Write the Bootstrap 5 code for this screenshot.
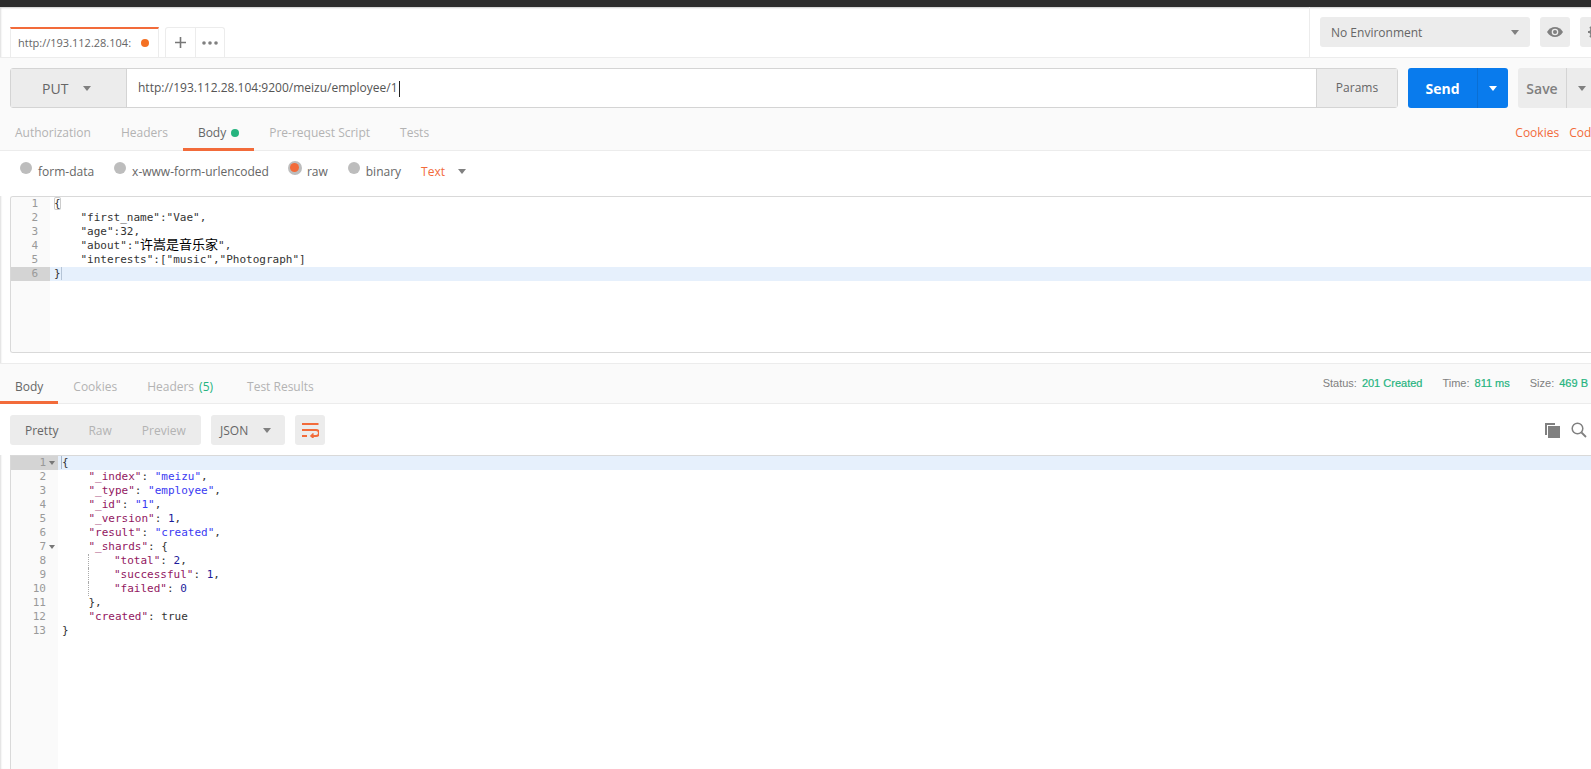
<!DOCTYPE html>
<html lang="en"><head><meta charset="utf-8"><title>Postman</title>
<link rel="stylesheet" href="https://cdn.jsdelivr.net/npm/bootstrap@5.3.0/dist/css/bootstrap.min.css">
<style>
html,body{height:100%;overflow:hidden;background:#fff}
body{font-family:"Open Sans","Noto Sans",sans-serif;font-size:12px;color:#808080}
.shell{width:1607px;height:769px;box-shadow:inset 2px 0 2px -1px #ddd}
.topline{height:7px;background:#2c2c2c;box-shadow:0 1px 2px #ccc}
.strip{height:51px;border-bottom:1px solid #ececec}
.tabbox{width:149px;height:30px;margin-left:10px;border:1px solid #ececec;border-top:2px solid #f26b3a;border-bottom:0;padding-left:7px;font-size:11px;color:#666;white-space:nowrap;overflow:hidden}
.unsaved{width:8px;height:8px;border-radius:50%;background:#f47023;margin-left:auto;margin-right:9px;flex:none}
.plusgroup{margin-left:6px;height:30px;border:1px solid #ececec;border-bottom:0;border-radius:3px 3px 0 0}
.plusgroup>div{height:100%;display:flex;align-items:center;justify-content:center}
.plusbox{width:30px;border-right:1px solid #ececec}
.dotsbox{width:28px}
.envarea{width:298px;border-left:1px solid #ececec;padding:10px 0 0 10px;gap:10px;height:50px}
.envsel{flex:none;width:210px;height:30px;background:#ececec;border-radius:3px;padding:1px 11px 0;color:#666}
.sqbtn{flex:none;width:30px;height:30px;background:#ececec;border-radius:3px}
.reqarea{background:#fafafa}
.reqrow{height:50px;padding:10px 10px 0;gap:10px}
.urlgroup{flex:1;border:1px solid #d4d4d4;border-radius:3px;background:#fff;min-width:0}
.methodbox{width:116px;background:#ececec;border-right:1px solid #d4d4d4;font-size:14px;color:#666;padding-left:31px;gap:15px}
.urlbox{flex:1;padding-left:11px;color:#555;font-size:12px}
.caret-bar{display:inline-block;width:1px;height:16px;background:#222;vertical-align:middle;margin-left:1px}
.paramsbox{width:81px;background:#ececec;border-left:1px solid #d4d4d4;color:#666;justify-content:center}
.sendgrp{width:100px;background:#097bed;border-radius:3px;color:#fff;font-size:14px;font-weight:700}
.sendmain{width:70px;justify-content:center;border-right:1px solid #0a6fd4}
.sendarr{width:30px;justify-content:center}
.savegrp{width:79px;background:#ececec;border-radius:3px;color:#808080;font-size:14px;font-weight:600}
.savemain{width:49px;justify-content:center;border-right:1px solid #d4d4d4}
.savearr{width:30px;justify-content:center}
.tabrow{height:43px;border-bottom:1px solid #ececec}
.tabitem{padding:7px 15px 0;color:#b3b3b3;height:43px;display:flex;align-items:center;gap:5px;margin-bottom:-1px;white-space:nowrap}
.tabitem.on{color:#666;border-bottom:3px solid #f26b3a;padding-top:10px}
.gooddot{width:8px;height:8px;border-radius:50%;background:#26b47f}
.greentxt{color:#26b47f}
.orangetxt{color:#f26b3a}
.linkrow{margin-left:auto;padding:7px 9px 0 0;gap:10px;color:#f26b3a}
.radiorow{height:45px;padding-left:20px;padding-bottom:4px;background:#fff;color:#666}
.radioitem{display:flex;align-items:center;gap:6px;margin-right:20px}
.radiodot{width:12px;height:12px;border-radius:50%;background:#bdbdbd;margin-top:-8px;display:flex;align-items:center;justify-content:center}
.radiodot.sel{width:14px;height:14px;margin-left:-1px;margin-right:-1px}
.radiodot.sel i{display:block;width:9px;height:9px;border-radius:50%;background:#f26b3a}
.trispace{margin-left:13px}
.editor{margin-left:10px;border:1px solid #d9d9d9;border-right:0;font-family:"DejaVu Sans Mono","Liberation Mono",monospace;font-size:11px;line-height:14px;color:#333;background:#fff;overflow:hidden}
.reqedit{height:157px;border-radius:3px 0 0 3px;margin-bottom:10px}
.resedit{height:314px;border-bottom:0}
.cmrow{display:flex;height:14px;white-space:pre}
.gutter{flex:none;background:#fafafa;color:#999;text-align:right}
.reqedit .gutter{width:39px;padding-right:12px}
.resedit .gutter{width:47px;padding-right:12px;position:relative}
.cmcode{padding-left:4px;flex:1}
.cmrow.act{background:#e6f0fc}
.cmrow.act .gutter{background:#d4d4d4}
.cmfill{background:linear-gradient(90deg,#fafafa 39px,#fff 39px);height:71px}
.resfill{background:linear-gradient(90deg,#fafafa 47px,#fff 47px);height:140px}
.cur{border-right:1px solid #b5c4d6}
.curl{box-shadow:-1px 0 0 #a9b8ca}
.brk{box-shadow:inset 0 0 0 1px #ccc;border-radius:2px}
.zh{font-family:"Noto Sans CJK SC",sans-serif;font-size:13px;color:#000;line-height:0}
.foldarr{position:absolute;right:3px;top:5px;width:0;height:0;border:3px solid transparent;border-top:4px solid #777;border-bottom:0}
.kk{color:#92175f}.ss{color:#3a3af2}.nn{color:#1c1c9c}
.guide{display:inline-block;border-left:1px dotted #aaa;height:14px;vertical-align:top;margin-left:26px;width:26px}
.restabs{height:41px;border-top:1px solid #ececec;border-bottom:1px solid #ececec;background:#fafafa}
.restabs .tabitem{height:40px;padding-top:6px}
.restabs .tabitem.on{padding-top:9px}
.statusbar{margin-left:auto;padding-right:19px;font-family:"Liberation Sans",Arial,sans-serif;font-size:11px;color:#808080;gap:20px}
.statusbar b{font-weight:400;color:#26b47f;margin-left:5px;-webkit-text-stroke:.2px #26b47f}
.resbar{height:51px;padding:11px 20px 10px 10px;gap:10px;background:#fff}
.viewgrp{width:191px;height:30px;background:#ececec;border-radius:3px;color:#b3b3b3;padding:1px 0 0 15px;gap:30px}
.viewgrp .live{color:#666}
.jsonsel{width:74px;height:30px;background:#ececec;border-radius:3px;padding:1px 14px 0 9px;color:#666}
.tools{gap:11px}
.tri{display:inline-block;width:0;height:0;border:4px solid transparent;border-top:5px solid #808080;border-bottom:0}
.tri.white{border-top-color:#fff}
</style></head>
<body>
<div class="shell d-flex flex-column">
  <div class="topline"></div>
  <div class="strip d-flex">
    <div class="flex-grow-1 d-flex align-items-end">
      <div class="tabbox d-flex align-items-center"><span>http://193.112.28.104:</span><span class="unsaved"></span></div>
      <div class="plusgroup d-flex">
        <div class="plusbox"><svg width="13" height="13" viewBox="0 0 13 13"><path d="M6.500 1v11M1 6.500h11" stroke="#777" stroke-width="1.600"/></svg></div>
        <div class="dotsbox"><svg width="16" height="4" viewBox="0 0 16 4"><circle cx="2" cy="2" r="1.800" fill="#808080"/><circle cx="8" cy="2" r="1.800" fill="#808080"/><circle cx="14" cy="2" r="1.800" fill="#808080"/></svg></div>
      </div>
    </div>
    <div class="envarea d-flex flex-none">
      <div class="envsel d-flex align-items-center justify-content-between"><span>No Environment</span><span class="tri"></span></div>
      <div class="sqbtn d-flex align-items-center justify-content-center"><svg width="16" height="10" viewBox="0 0 16 10"><path d="M0 5c2-3.200 5-5 8-5s6 1.800 8 5c-2 3.200-5 5-8 5S2 8.200 0 5z" fill="#808080"/><circle cx="8" cy="5" r="3.300" fill="#ececec"/><circle cx="8" cy="5" r="2" fill="#808080"/></svg></div>
      <div class="sqbtn d-flex align-items-center justify-content-center"><svg width="14" height="14" viewBox="0 0 14 14"><circle cx="7" cy="7" r="4" fill="none" stroke="#808080" stroke-width="3"/><path d="M7 0v3M7 11v3M0 7h3M11 7h3M2 2l2 2M10 10l2 2M12 2l-2 2M4 10l-2 2" stroke="#808080" stroke-width="2"/></svg></div>
    </div>
  </div>
  <div class="reqarea">
    <div class="reqrow d-flex">
      <div class="urlgroup d-flex">
        <div class="methodbox d-flex align-items-center"><span>PUT</span><span class="tri"></span></div>
        <div class="urlbox d-flex align-items-center"><span>http://193.112.28.104:9200/meizu/employee/1<span class="caret-bar"></span></span></div>
        <div class="paramsbox d-flex align-items-center">Params</div>
      </div>
      <div class="sendgrp d-flex"><div class="sendmain d-flex align-items-center">Send</div><div class="sendarr d-flex align-items-center"><span class="tri white"></span></div></div>
      <div class="savegrp d-flex"><div class="savemain d-flex align-items-center">Save</div><div class="savearr d-flex align-items-center"><span class="tri"></span></div></div>
    </div>
    <div class="tabrow d-flex">
      <div class="tabitem">Authorization</div>
      <div class="tabitem">Headers</div>
      <div class="tabitem on">Body<span class="gooddot"></span></div>
      <div class="tabitem">Pre-request Script</div>
      <div class="tabitem">Tests</div>
      <div class="linkrow d-flex align-items-center"><span>Cookies</span><span>Code</span></div>
    </div>
  </div>
  <div class="radiorow d-flex align-items-center">
    <label class="radioitem"><span class="radiodot"></span>form-data</label>
    <label class="radioitem"><span class="radiodot"></span>x-www-form-urlencoded</label>
    <label class="radioitem"><span class="radiodot sel"><i></i></span>raw</label>
    <label class="radioitem"><span class="radiodot"></span>binary</label>
    <span class="orangetxt">Text</span><span class="tri trispace"></span>
  </div>
  <div class="editor reqedit">
    <div class="cmrow"><div class="gutter">1</div><div class="cmcode"><span class="brk">{</span></div></div>
    <div class="cmrow"><div class="gutter">2</div><div class="cmcode">    "first_name":"Vae",</div></div>
    <div class="cmrow"><div class="gutter">3</div><div class="cmcode">    "age":32,</div></div>
    <div class="cmrow"><div class="gutter">4</div><div class="cmcode">    "about":"<span class="zh">许嵩是音乐家</span>",</div></div>
    <div class="cmrow"><div class="gutter">5</div><div class="cmcode">    "interests":["music","Photograph"]</div></div>
    <div class="cmrow act"><div class="gutter">6</div><div class="cmcode"><span class="cur">}</span></div></div>
    <div class="cmfill"></div>
  </div>
  <div class="restabs d-flex">
    <div class="tabitem on">Body</div>
    <div class="tabitem">Cookies</div>
    <div class="tabitem">Headers <span class="greentxt">(5)</span></div>
    <div class="tabitem ms-1">Test Results</div>
    <div class="statusbar d-flex align-items-center"><span>Status:<b>201 Created</b></span><span>Time:<b>811 ms</b></span><span>Size:<b>469 B</b></span></div>
  </div>
  <div class="resbar d-flex">
    <div class="viewgrp d-flex align-items-center"><span class="live">Pretty</span><span>Raw</span><span>Preview</span></div>
    <div class="jsonsel d-flex align-items-center justify-content-between"><span>JSON</span><span class="tri"></span></div>
    <div class="sqbtn d-flex align-items-center justify-content-center"><svg width="17" height="15" viewBox="0 0 17 15"><path d="M0 1h16.500M0 7h14a2.500 2.500 0 0 1 0 6H9M0 13h5" fill="none" stroke="#f26b3a" stroke-width="2"/><path d="M11.500 10.500 9 13l2.500 2" fill="none" stroke="#f26b3a" stroke-width="1.600"/></svg></div>
    <div class="tools ms-auto d-flex align-items-center">
      <svg width="15" height="15" viewBox="0 0 15 15"><path d="M0 0h10v2H2v10H0z" fill="#808080"/><rect x="3" y="3" width="12" height="12" fill="#808080"/></svg>
      <svg width="16" height="16" viewBox="0 0 16 16"><circle cx="6.500" cy="6.500" r="5.300" fill="none" stroke="#808080" stroke-width="1.500"/><path d="M10.500 10.500 15 15" stroke="#808080" stroke-width="1.800"/></svg>
    </div>
  </div>
  <div class="editor resedit">
    <div class="cmrow act"><div class="gutter">1<i class="foldarr"></i></div><div class="cmcode"><span class="curl">{</span></div></div>
    <div class="cmrow"><div class="gutter">2</div><div class="cmcode">    <span class="kk">"_index"</span>: <span class="ss">"meizu"</span>,</div></div>
    <div class="cmrow"><div class="gutter">3</div><div class="cmcode">    <span class="kk">"_type"</span>: <span class="ss">"employee"</span>,</div></div>
    <div class="cmrow"><div class="gutter">4</div><div class="cmcode">    <span class="kk">"_id"</span>: <span class="ss">"1"</span>,</div></div>
    <div class="cmrow"><div class="gutter">5</div><div class="cmcode">    <span class="kk">"_version"</span>: <span class="nn">1</span>,</div></div>
    <div class="cmrow"><div class="gutter">6</div><div class="cmcode">    <span class="kk">"result"</span>: <span class="ss">"created"</span>,</div></div>
    <div class="cmrow"><div class="gutter">7<i class="foldarr"></i></div><div class="cmcode">    <span class="kk">"_shards"</span>: {</div></div>
    <div class="cmrow"><div class="gutter">8</div><div class="cmcode"><span class="guide"></span><span class="kk">"total"</span>: <span class="nn">2</span>,</div></div>
    <div class="cmrow"><div class="gutter">9</div><div class="cmcode"><span class="guide"></span><span class="kk">"successful"</span>: <span class="nn">1</span>,</div></div>
    <div class="cmrow"><div class="gutter">10</div><div class="cmcode"><span class="guide"></span><span class="kk">"failed"</span>: <span class="nn">0</span></div></div>
    <div class="cmrow"><div class="gutter">11</div><div class="cmcode">    },</div></div>
    <div class="cmrow"><div class="gutter">12</div><div class="cmcode">    <span class="kk">"created"</span>: true</div></div>
    <div class="cmrow"><div class="gutter">13</div><div class="cmcode">}</div></div>
    <div class="resfill"></div>
  </div>
</div>
<script src="https://cdn.jsdelivr.net/npm/bootstrap@5.3.0/dist/js/bootstrap.bundle.min.js"></script>
</body></html>
